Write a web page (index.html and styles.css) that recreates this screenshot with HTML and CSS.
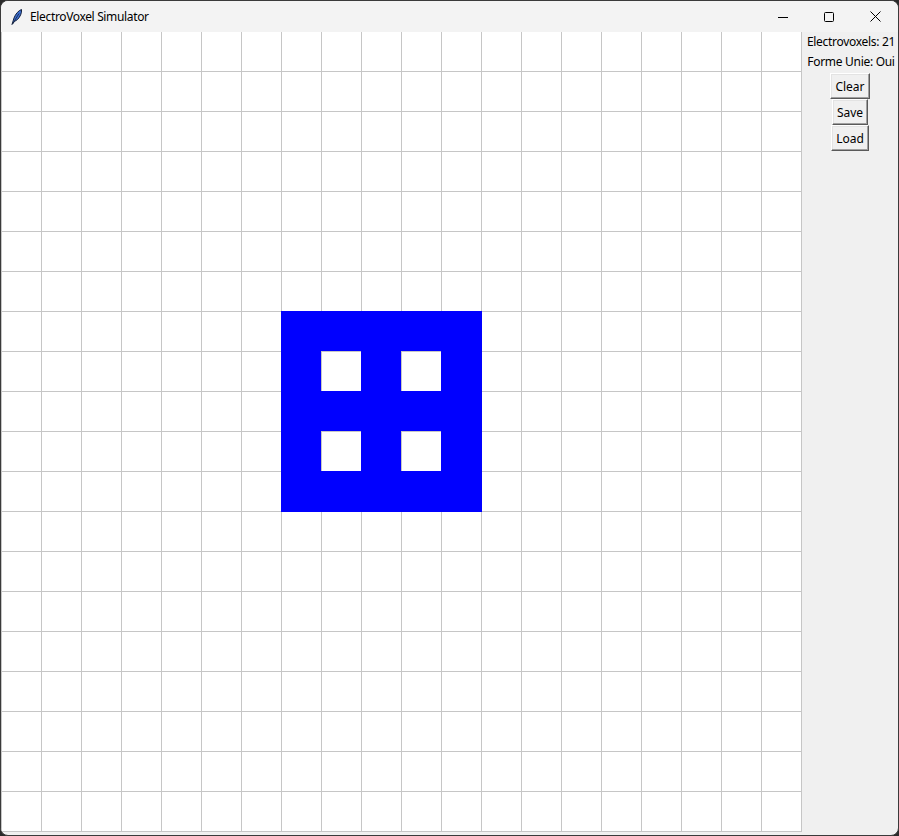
FILE: index.html
```html
<!DOCTYPE html>
<html>
<head>
<meta charset="utf-8">
<title>ElectroVoxel Simulator</title>
<link rel="stylesheet" href="styles.css">
</head>
<body>
<div class="window">
  <div class="titlebar">
    <svg class="app-icon" width="16" height="16" viewBox="0 0 16 16">
      <path d="M3 15.5 L5 9 C6.5 5 9.5 1.5 12.5 0.5 C13 4 11 8 8.5 10.5 L5.5 12.5 Z" fill="#3d6fd0" stroke="#14213d" stroke-width="1"/>
      <path d="M3.5 15 L10 4.5" stroke="#14213d" stroke-width="0.8"/>
    </svg>
    <span class="title">ElectroVoxel Simulator</span>
    <div class="controls">
      <div class="ctrl">
        <svg width="10" height="10" viewBox="0 0 10 10"><path d="M0 5.5H10" stroke="#000" stroke-width="1"/></svg>
      </div>
      <div class="ctrl">
        <svg width="10" height="10" viewBox="0 0 10 10"><rect x="0.5" y="0.5" width="9" height="9" rx="1" fill="none" stroke="#000" stroke-width="1"/></svg>
      </div>
      <div class="ctrl">
        <svg width="11" height="11" viewBox="0 0 11 11"><path d="M0.5 0.5L10.5 10.5M10.5 0.5L0.5 10.5" stroke="#000" stroke-width="1"/></svg>
      </div>
    </div>
  </div>
  <div class="main">
    <svg class="canvas" width="801" height="800" viewBox="0 0 801 800" shape-rendering="crispEdges">
      <defs>
        <pattern id="grid" width="40" height="40" patternUnits="userSpaceOnUse">
          <rect width="40" height="40" fill="#ffffff"/>
          <path d="M0.5 0V40M0 39.5H40" stroke="#c6c6c6" stroke-width="1"/>
        </pattern>
      </defs>
      <rect x="0" y="0" width="801" height="800" fill="url(#grid)"/>
      <rect x="280" y="279" width="201" height="201" fill="#0000ff"/>
      <rect x="320" y="319" width="40" height="40" fill="#c6c6c6"/>
      <rect x="321" y="320" width="39" height="39" fill="#ffffff"/>
      <rect x="400" y="319" width="40" height="40" fill="#c6c6c6"/>
      <rect x="401" y="320" width="39" height="39" fill="#ffffff"/>
      <rect x="320" y="399" width="40" height="40" fill="#c6c6c6"/>
      <rect x="321" y="400" width="39" height="39" fill="#ffffff"/>
      <rect x="400" y="399" width="40" height="40" fill="#c6c6c6"/>
      <rect x="401" y="400" width="39" height="39" fill="#ffffff"/>
    </svg>
    <div class="panel">
      <div class="label">Electrovoxels: 21</div>
      <div class="label">Forme Unie: Oui</div>
      <div class="buttons">
        <button class="btn">Clear</button>
        <button class="btn">Save</button>
        <button class="btn">Load</button>
      </div>
    </div>
  </div>
</div>
</body>
</html>
```
FILE: styles.css
```css
html, body {
  margin: 0;
  padding: 0;
}
body {
  background: #2a2a2a;
  width: 899px;
  height: 836px;
  overflow: hidden;
  font-family: "Noto Sans", "Open Sans", sans-serif;
}
.window {
  width: 899px;
  height: 836px;
  box-sizing: border-box;
  border: 1px solid #3a3a3a;
  border-radius: 8px;
  overflow: hidden;
  background: #f0f0f0;
  display: flex;
  flex-direction: column;
}
.titlebar {
  height: 31px;
  flex: none;
  display: flex;
  align-items: center;
  background: #f3f3f3;
}
.app-icon {
  margin-left: 8px;
  margin-right: 5px;
  flex: none;
}
.title {
  font-size: 12px;
  color: #000;
  line-height: 16px;
  letter-spacing: -0.35px;
}
.controls {
  margin-left: auto;
  display: flex;
  height: 100%;
}
.ctrl {
  width: 46px;
  height: 100%;
  display: flex;
  align-items: center;
  justify-content: center;
}
.main {
  flex: 1;
  display: flex;
  align-items: flex-start;
}
.canvas {
  display: block;
  flex: none;
}
.panel {
  width: 96px;
  flex: none;
  display: flex;
  flex-direction: column;
  align-items: center;
}
.label {
  height: 20px;
  line-height: 20px;
  font-size: 12px;
  color: #000;
  white-space: nowrap;
  letter-spacing: -0.3px;
  padding-left: 2px;
}
.buttons {
  margin-top: 1px;
  display: flex;
  flex-direction: column;
  align-items: center;
}
.btn {
  height: 26px;
  padding: 0 4px;
  margin: 0;
  font-family: "Noto Sans", "Open Sans", sans-serif;
  font-size: 12px;
  color: #000;
  background: #f0f0f0;
  border: 1px solid;
  border-color: #ffffff #5a5a5a #5a5a5a #ffffff;
  box-shadow: inset -1px -1px 0 #a0a0a0, inset 1px 1px 0 #e3e3e3;
  border-radius: 0;
}
```
